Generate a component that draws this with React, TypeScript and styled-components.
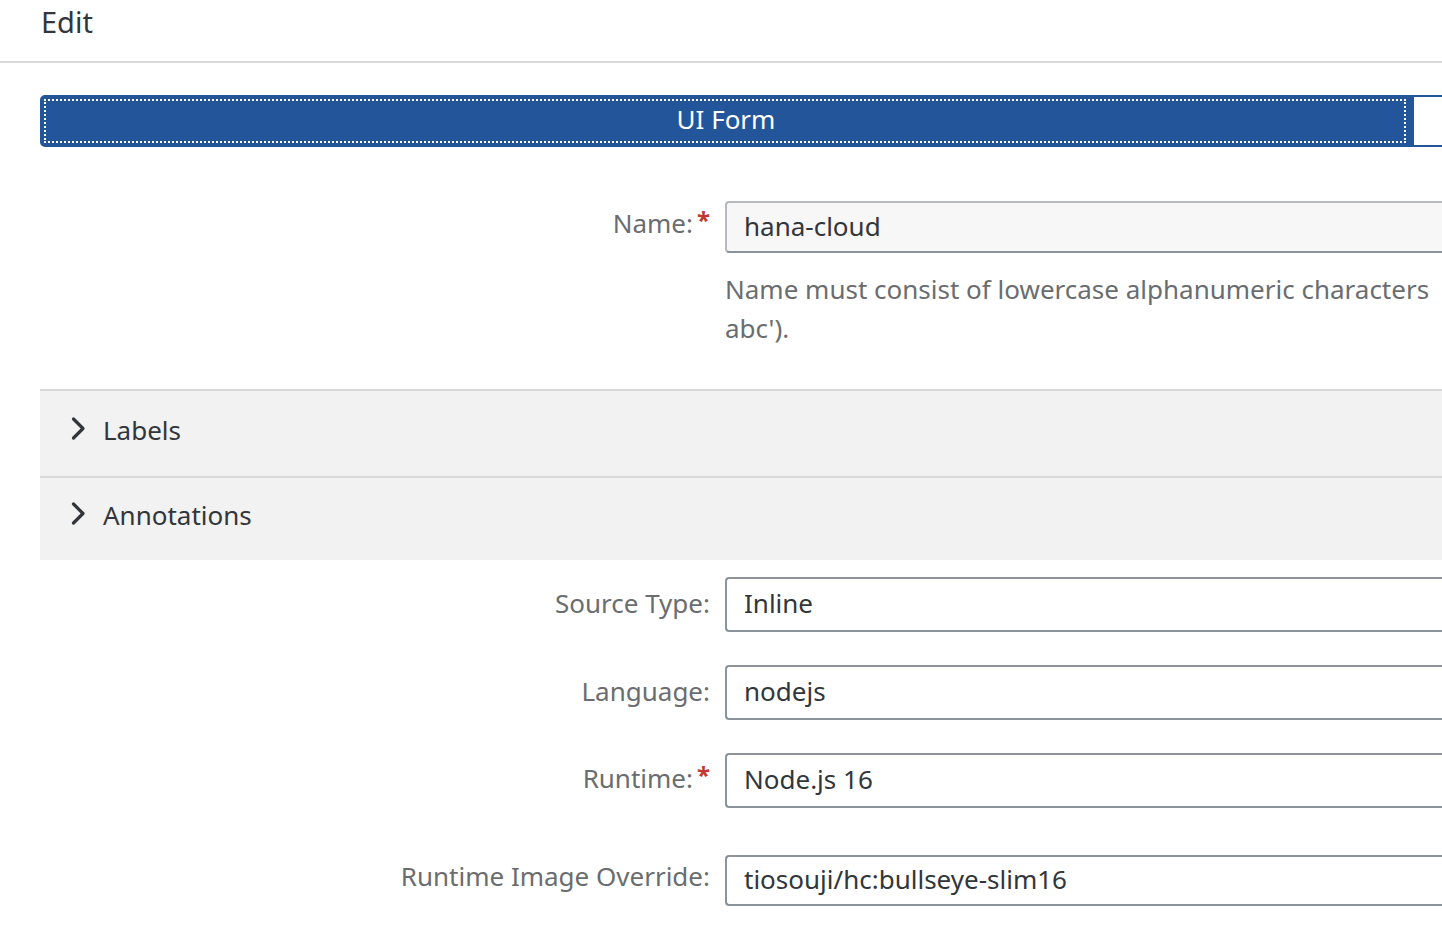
import React from "react";
import styled, { createGlobalStyle } from "styled-components";

const GlobalStyle = createGlobalStyle`
  html, body {
    margin: 0;
    padding: 0;
    background: #ffffff;
    overflow: hidden;
  }
  body {
    font-family: "Noto Sans", "Open Sans", Arial, sans-serif;
    color: #32363a;
  }
`;

const Page = styled.div`
  width: 1800px;
`;

const Header = styled.div`
  height: 61px;
  border-bottom: 2px solid #d9d9d9;
  padding-left: 41px;
  display: flex;
  align-items: flex-start;
`;

const Title = styled.h1`
  margin: 0;
  font-weight: 400;
  font-size: 29px;
  line-height: 44px;
  color: #32363a;
`;

const Content = styled.div`
  padding: 32px 0 0 40px;
`;

const Segmented = styled.div`
  display: flex;
  height: 52px;
`;

const SegmentButton = styled.button<{ $active?: boolean; $width: number }>`
  width: ${(p) => p.$width}px;
  height: 52px;
  box-sizing: border-box;
  position: relative;
  font-family: inherit;
  font-size: 26px;
  line-height: 44px;
  border: 2px solid #23559b;
  border-radius: ${(p) => (p.$active ? "5px 0 0 5px" : "0")};
  background: ${(p) => (p.$active ? "#23559b" : "#ffffff")};
  color: ${(p) => (p.$active ? "#ffffff" : "#23559b")};
  padding: 0 0 4px;
  &::after {
    content: "";
    display: ${(p) => (p.$active ? "block" : "none")};
    position: absolute;
    inset: 2px 4px 2px 2px;
    border: 2px dotted #ffffff;
  }
`;

const Row = styled.div<{ $top: number }>`
  display: flex;
  align-items: flex-start;
  margin-top: ${(p) => p.$top}px;
`;

const LabelCell = styled.div<{ $h: number }>`
  width: 670px;
  height: ${(p) => p.$h}px;
  display: flex;
  align-items: center;
  justify-content: flex-end;
  padding-right: 15px;
  flex-shrink: 0;
`;

const Label = styled.label<{ $shift?: number }>`
  font-size: 26px;
  color: #6a6d70;
  white-space: nowrap;
  margin-top: ${(p) => p.$shift ?? 0}px;
`;

const Star = styled.span`
  color: #c03a31;
  font-size: 24px;
  font-weight: 700;
  margin-left: 4px;
  position: relative;
  top: -4px;
`;

const FieldColumn = styled.div`
  flex: 1;
`;

const Input = styled.div<{ $h: number; $readonly?: boolean }>`
  height: ${(p) => p.$h}px;
  box-sizing: border-box;
  border: 2px solid ${(p) => (p.$readonly ? "#b6babe" : "#8d939a")};
  border-bottom-color: #8d939a;
  border-right: none;
  border-radius: 4px 0 0 4px;
  background: ${(p) => (p.$readonly ? "#f7f7f7" : "#ffffff")};
  display: flex;
  align-items: center;
  padding: 0 0 3px 17px;
  font-size: 26px;
  color: #32363a;
  white-space: nowrap;
`;

const Help = styled.div`
  margin-top: 17px;
  font-size: 26px;
  line-height: 39px;
  color: #6a6d70;
  white-space: nowrap;
`;

const Panels = styled.div`
  margin-top: 41px;
`;

const Panel = styled.div<{ $h: number }>`
  height: ${(p) => p.$h}px;
  box-sizing: border-box;
  background: #f2f2f2;
  border-top: 2px solid #d9d9d9;
  display: flex;
  align-items: center;
  padding: 0 0 8px 30px;
  gap: 15px;
  font-size: 26px;
  color: #32363a;
`;

const Chevron = () => (
  <svg width="18" height="26" viewBox="0 0 18 26" style={{ marginTop: -2 }}>
    <path
      d="M3.5 3 L13 12.5 L3.5 22"
      fill="none"
      stroke="#32363a"
      strokeWidth="3.2"
      strokeLinecap="round"
      strokeLinejoin="round"
    />
  </svg>
);

const App = () => {
  return (
    <Page>
      <GlobalStyle />
      <Header>
        <Title>Edit</Title>
      </Header>
      <Content>
        <Segmented>
          <SegmentButton $active $width={1372}>
            UI Form
          </SegmentButton>
          <SegmentButton $width={300} aria-label="YAML" />
        </Segmented>

        <Row $top={54}>
          <LabelCell $h={52}>
            <Label $shift={-8}>
              Name:<Star>*</Star>
            </Label>
          </LabelCell>
          <FieldColumn>
            <Input $h={52} $readonly>
              hana-cloud
            </Input>
            <Help>
              Name must consist of lowercase alphanumeric characters
              <br />
              abc').
            </Help>
          </FieldColumn>
        </Row>

        <Panels>
          <Panel $h={87}>
            <Chevron />
            Labels
          </Panel>
          <Panel $h={84}>
            <Chevron />
            Annotations
          </Panel>
        </Panels>

        <Row $top={17}>
          <LabelCell $h={55}>
            <Label $shift={-4}>Source Type:</Label>
          </LabelCell>
          <FieldColumn>
            <Input $h={55}>Inline</Input>
          </FieldColumn>
        </Row>

        <Row $top={33}>
          <LabelCell $h={55}>
            <Label $shift={-4}>Language:</Label>
          </LabelCell>
          <FieldColumn>
            <Input $h={55}>nodejs</Input>
          </FieldColumn>
        </Row>

        <Row $top={33}>
          <LabelCell $h={55}>
            <Label $shift={-6}>
              Runtime:<Star>*</Star>
            </Label>
          </LabelCell>
          <FieldColumn>
            <Input $h={55}>Node.js 16</Input>
          </FieldColumn>
        </Row>

        <Row $top={47}>
          <LabelCell $h={51}>
            <Label $shift={-10}>Runtime Image Override:</Label>
          </LabelCell>
          <FieldColumn>
            <Input $h={51}>tiosouji/hc:bullseye-slim16</Input>
          </FieldColumn>
        </Row>
      </Content>
    </Page>
  );
};

export default App;
